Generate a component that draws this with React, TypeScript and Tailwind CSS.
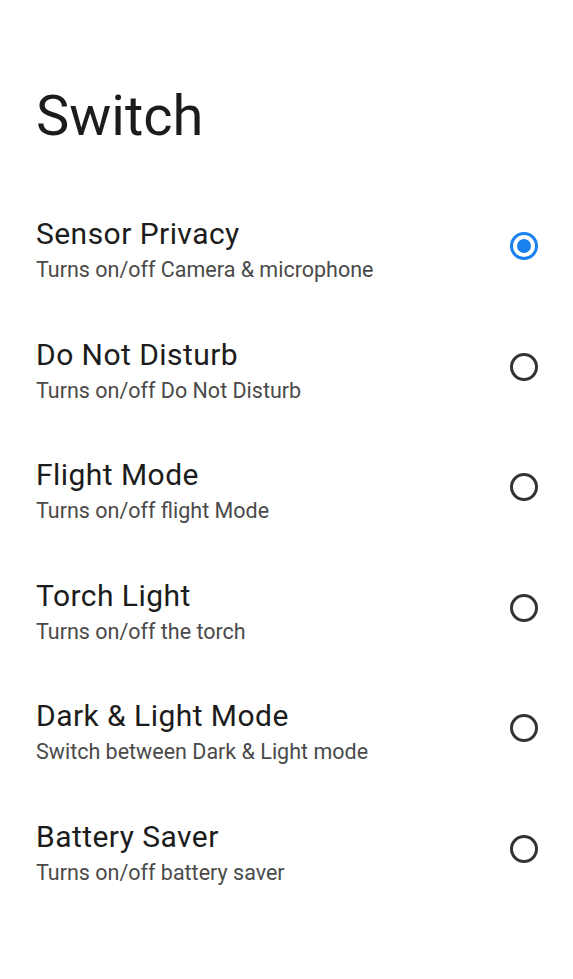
import { useState } from "react";

// 1行分の設定項目
type Item = { title: string; desc: string };

const items: Item[] = [
  { title: "Sensor Privacy", desc: "Turns on/off Camera & microphone" },
  { title: "Do Not Disturb", desc: "Turns on/off Do Not Disturb" },
  { title: "Flight Mode", desc: "Turns on/off flight Mode" },
  { title: "Torch Light", desc: "Turns on/off the torch" },
  { title: "Dark & Light Mode", desc: "Switch between Dark & Light mode" },
  { title: "Battery Saver", desc: "Turns on/off battery saver" },
];

export default function App() {
  const [selected, setSelected] = useState(0); // 選ばれている行

  return (
    <main
      className="min-h-screen w-full bg-white pl-9 pr-[35px] pt-[83px] text-[#1c1c1c]"
      style={{ fontFamily: "Roboto, 'Noto Sans', sans-serif" }}
    >
      <h1 className="text-[56px] font-normal leading-[66px]">Switch</h1>

      <div className="mt-[67px] flex flex-col gap-[53.5px]">
        {items.map((it, i) => (
          <button
            key={i}
            type="button"
            onClick={() => setSelected(i)}
            className="flex items-center justify-between text-left"
          >
            <div>
              <div className="text-[30px] leading-[36px] tracking-[0.015em]">
                {it.title}
              </div>
              <div className="mt-[5px] text-[21.5px] leading-[26px] text-[#4a4a4a]">
                {it.desc}
              </div>
            </div>
            <span
              className={
                "mb-[7px] flex h-7 w-7 items-center justify-center rounded-full border-[3px] " +
                (selected === i ? "border-[#1a82f0]" : "border-[#333333]")
              }
            >
              {selected === i && (
                <span className="h-[14px] w-[14px] rounded-full bg-[#1a82f0]" />
              )}
            </span>
          </button>
        ))}
      </div>
    </main>
  );
}
